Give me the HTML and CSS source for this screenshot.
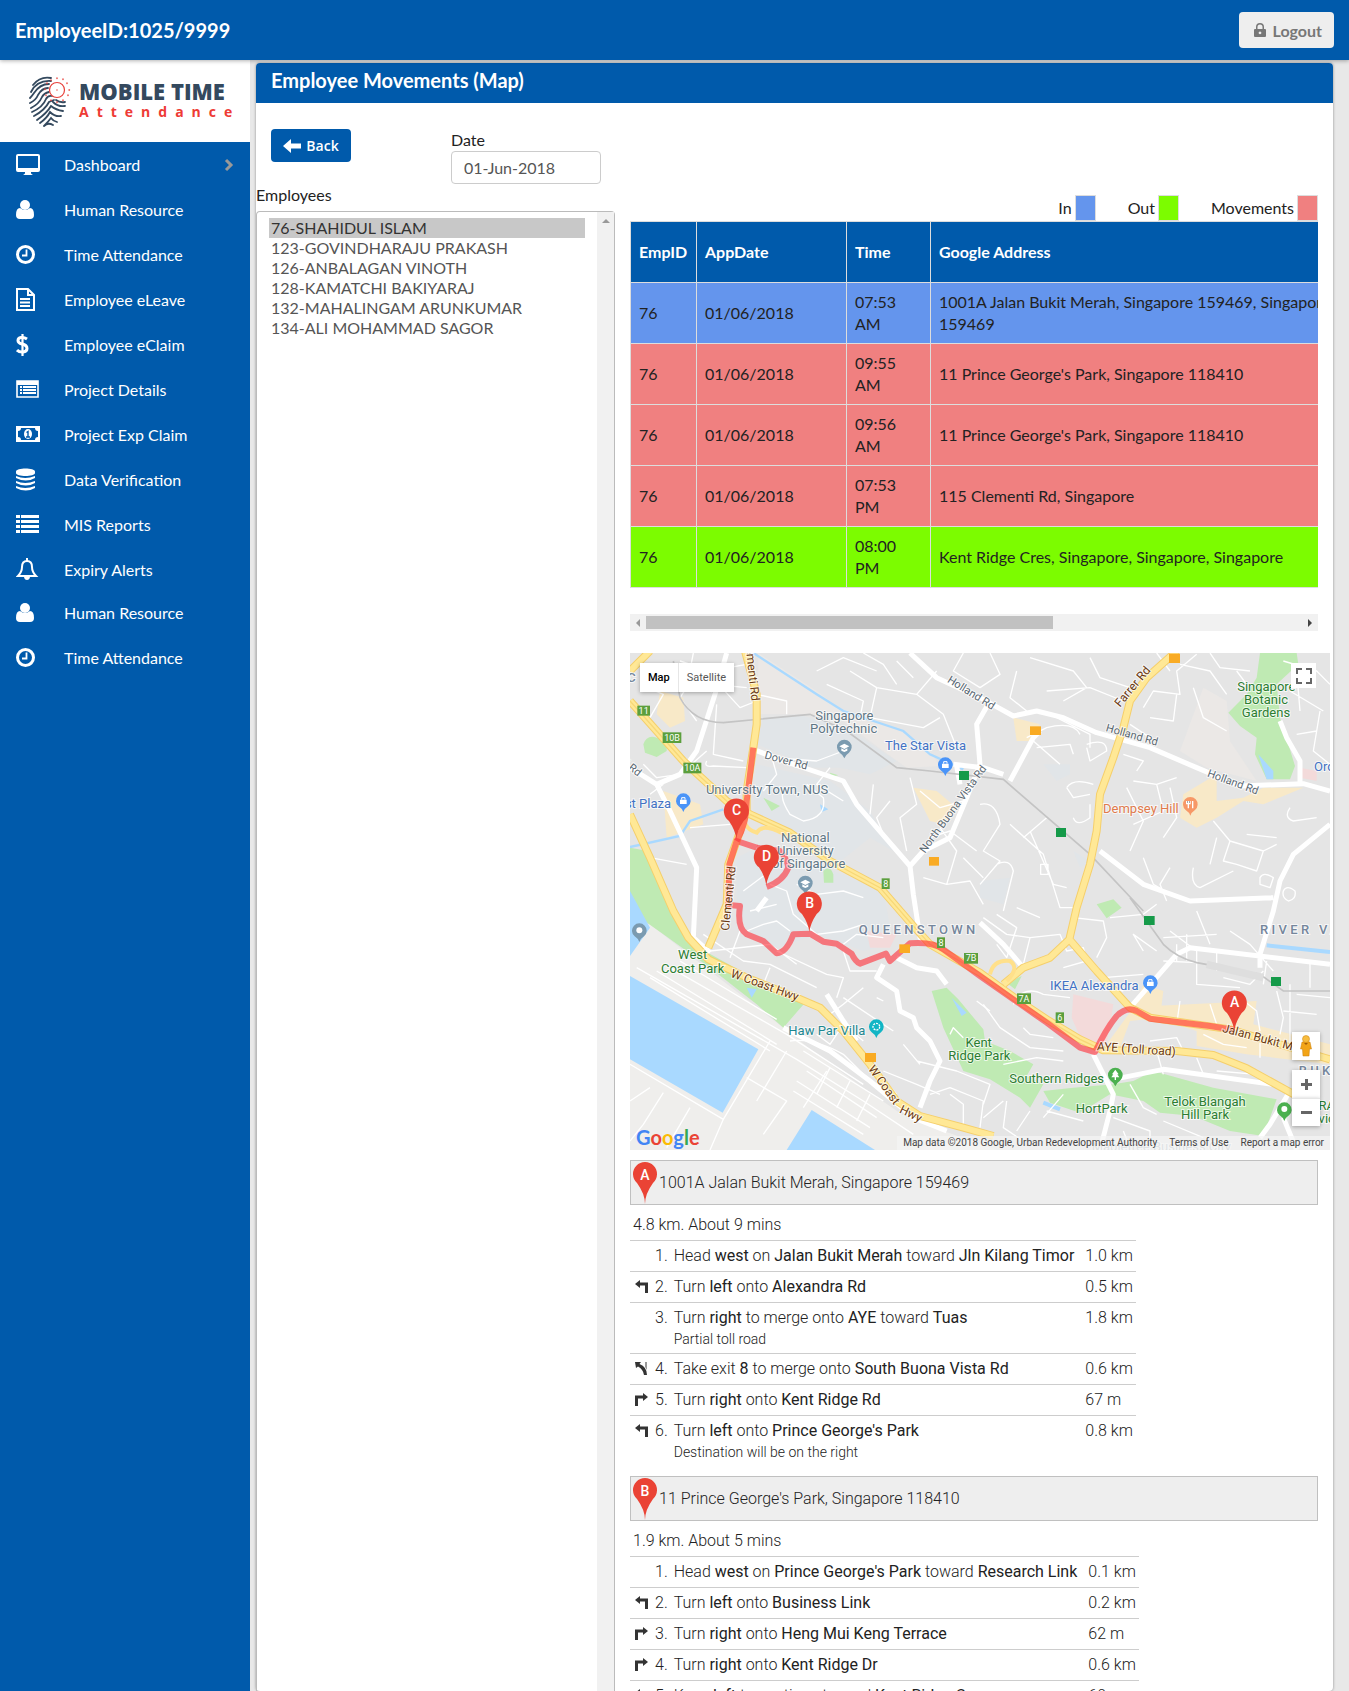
FILE: index.html
```html
<!DOCTYPE html>
<html lang="en">
<head>
    <meta charset="UTF-8">
    <meta name="viewport" content="width=device-width, initial-scale=1.0">
    <title>Employee Movements (Map)</title>
    <link rel="stylesheet" href="styles.css">
</head>
<body>
    <header class="topbar">
        <h1>EmployeeID:1025/9999</h1>
        <button type="button" class="btn-logout">
            <svg width="12" height="15" viewBox="0 0 12 15"><path fill="#777" fill-rule="evenodd" d="M2 6V4a4 4 0 0 1 8 0v2h1q1 0 1 1v6q0 1-1 1H1q-1 0-1-1V7q0-1 1-1zm1.500 0h5V4a2.500 2.500 0 0 0-5 0zM6 8.500a1.400 1.400 0 1 0 .01 0z"/></svg>
            Logout
        </button>
    </header>
    <div class="layout">
        <aside class="sidebar">
            <div class="logo">
                <svg width="42" height="52" viewBox="0 0 42 52" fill="none" stroke="#34495e" stroke-width="1.8" stroke-linecap="round">
                    <path d="M4 10Q11 1 22 3M2 17Q8 5 22 6M1 23Q3 21 5 18Q11 9 20 9M1 28Q7 25 9 20Q13 13 19 13M2 33Q10 29 13 22Q15 18 20 17M3 37Q14 32 17 24Q19 20 23 21M5 41Q16 35 20 27L25 25M8 45Q18 38 22 31Q27 35 34 36M11 48Q18 43 21 37Q26 42 32 41M15 51Q19 47 22 43Q24 46 28 47M15 51Q19 47 24 50M24 27Q29 32 36 31M27 25Q31 28 36 27"/>
                    <circle cx="28" cy="15" r="7.500" stroke="#e8403a" stroke-width="1.200" fill="#fff"/>
                    <path stroke="#e8403a" stroke-width="1.400" d="M28 3v.5M34 4v.5M38 8v.5M40 15h.5M39 20v.5M34 25v.5M28 27v.5M22 25v.5M17 20v.5M16 14v.5M18 8v.5M22 5v.5M28 15v.1"/>
                </svg>
                <div class="logo-text">
                    <strong>MOBILE TIME</strong>
                    <span>Attendance</span>
                </div>
            </div>
            <nav>
                <ul>
                    <li><a href="#">
                        <svg viewBox="0 0 24 24"><path fill="#fff" fill-rule="evenodd" d="M2 1h20q2 0 2 2v14q0 2-2 2h-7v1q0 1 1.500 1.500V22h-9v-.5Q9 21 9 20v-1H2q-2 0-2-2V3q0-2 2-2zm0 2v12h20V3z"/></svg>
                        Dashboard
                        <svg class="arrow" viewBox="0 0 10 14"><path d="M2 2l5 5-5 5" fill="none" stroke="#999" stroke-width="3"/></svg>
                    </a></li>
                    <li><a href="#">
                        <svg viewBox="0 0 24 24"><circle cx="9" cy="7" r="5" fill="#fff"/><path fill="#fff" d="M4 10q5 4 10 0q4 0 4 7q0 4-4 4H4q-4 0-4-4q0-7 4-7z"/></svg>
                        Human Resource
                    </a></li>
                    <li><a href="#">
                        <svg viewBox="0 0 24 24"><circle cx="9.500" cy="11.500" r="8" fill="none" stroke="#fff" stroke-width="3"/><path d="M10.500 6.500v6H6" fill="none" stroke="#fff" stroke-width="1.800"/></svg>
                        Time Attendance
                    </a></li>
                    <li><a href="#">
                        <svg viewBox="0 0 24 24"><path fill="none" stroke="#fff" stroke-width="2" d="M1 1h11l6 6v15H1zM12 1v6h6M4 11h10M4 14.500h10M4 18h10"/></svg>
                        Employee eLeave
                    </a></li>
                    <li><a href="#">
                        <svg viewBox="0 0 24 24"><path fill="none" stroke="#fff" stroke-width="3" d="M11 6Q8 4 5 4.500Q2 5 2 7.500Q2 10 6 11Q11 12 11 15.500Q11 18.500 7 19Q3 19.200 1 17"/><path d="M6.500 1v22" stroke="#fff" stroke-width="2.200"/></svg>
                        Employee eClaim
                    </a></li>
                    <li><a href="#">
                        <svg viewBox="0 0 24 24"><path fill="none" stroke="#fff" stroke-width="1.600" d="M1 3h21v16H1z"/><path fill="#fff" d="M1 3h21v4H1zM4 8h2v2H4zM4 11h2v2H4zM4 14h2v2H4zM7 8h13v2H7zM7 11h13v2H7zM7 14h13v2H7z"/></svg>
                        Project Details
                    </a></li>
                    <li><a href="#">
                        <svg viewBox="0 0 24 24"><path fill="#fff" fill-rule="evenodd" d="M0 3h24v16H0zM5 5q0 3-3 3v6q3 0 3 3h14q0-3 3-3V8q-3 0-3-3z"/><ellipse cx="12" cy="11" rx="4" ry="5" fill="#fff"/><path fill="none" stroke="#005aab" stroke-width="1.400" d="M10.500 9.500l1.500-1v5M10 14h4"/></svg>
                        Project Exp Claim
                    </a></li>
                    <li><a href="#">
                        <svg viewBox="0 0 24 24"><path fill="#fff" d="M0 3.500C0-.5 19-.5 19 3.500V5C19 9 0 9 0 5zM0 8q9 4 19 0v2q-9 5-19 0zM0 13q9 4 19 0v2q-9 5-19 0zM0 18q9 4 19 0v2q-9 5-19 0z"/></svg>
                        Data Verification
                    </a></li>
                    <li><a href="#">
                        <svg viewBox="0 0 24 24"><path fill="#fff" d="M0 2h4v3H0zM0 7h4v3H0zM0 12h4v3H0zM0 17h4v3H0zM5 2h18v3H5zM5 7h18v3H5zM5 12h18v3H5zM5 17h18v3H5z"/></svg>
                        MIS Reports
                    </a></li>
                    <li><a href="#">
                        <svg viewBox="0 0 24 24"><path fill="none" stroke="#fff" stroke-width="2" d="M2 18Q6 14 6 9Q6 3 11 3Q16 3 16 9Q16 14 20 18z"/><path fill="#fff" d="M10 0h2v3h-2zM8 19h6q-.5 3-3 3t-3-3z"/></svg>
                        Expiry Alerts
                    </a></li>
                </ul>
                <ul class="second">
                    <li><a href="#">
                        <svg viewBox="0 0 24 24"><circle cx="9" cy="7" r="5" fill="#fff"/><path fill="#fff" d="M4 10q5 4 10 0q4 0 4 7q0 4-4 4H4q-4 0-4-4q0-7 4-7z"/></svg>
                        Human Resource
                    </a></li>
                    <li><a href="#">
                        <svg viewBox="0 0 24 24"><circle cx="9.500" cy="11.500" r="8" fill="none" stroke="#fff" stroke-width="3"/><path d="M10.500 6.500v6H6" fill="none" stroke="#fff" stroke-width="1.800"/></svg>
                        Time Attendance
                    </a></li>
                </ul>
            </nav>
        </aside>
        <main class="card">
            <h2>Employee Movements (Map)</h2>
            <div class="filters">
                <button type="button" class="btn-back">
                    <svg width="18" height="14" viewBox="0 0 18 14"><path fill="#fff" d="M0 7l8-7v4.500h10v5H8V14z"/></svg>
                    Back
                </button>
                <div class="field">
                    <label for="date">Date</label>
                    <input type="text" id="date" value="01-Jun-2018">
                </div>
            </div>
            <div class="columns">
                <div class="employees">
                    <label for="employees">Employees</label>
                    <div class="listbox">
                        <select id="employees" size="60">
                            <option class="current">76-SHAHIDUL ISLAM</option>
                            <option>123-GOVINDHARAJU PRAKASH</option>
                            <option>126-ANBALAGAN VINOTH</option>
                            <option>128-KAMATCHI BAKIYARAJ</option>
                            <option>132-MAHALINGAM ARUNKUMAR</option>
                            <option>134-ALI MOHAMMAD SAGOR</option>
                        </select>
                        <div class="vbar">
                            <svg width="8" height="4" viewBox="0 0 8 4"><path fill="#999" d="M0 4l4-4 4 4z"/></svg>
                        </div>
                    </div>
                </div>
                <div class="movements">
                    <div class="legend">
                        <span>In <i class="in"></i></span>
                        <span>Out <i class="out"></i></span>
                        <span>Movements <i class="move"></i></span>
                    </div>
                    <div class="scrollable">
                        <table class="grid">
                            <thead>
                                <tr>
                                    <th class="c-id">EmpID</th>
                                    <th class="c-date">AppDate</th>
                                    <th class="c-time">Time</th>
                                    <th>Google Address</th>
                                </tr>
                            </thead>
                            <tbody>
                                <tr class="in"><td>76</td><td>01/06/2018</td><td>07:53 AM</td><td>1001A Jalan Bukit Merah, Singapore 159469, Singapore<br>159469</td></tr>
                                <tr class="move"><td>76</td><td>01/06/2018</td><td>09:55 AM</td><td>11 Prince George's Park, Singapore 118410</td></tr>
                                <tr class="move"><td>76</td><td>01/06/2018</td><td>09:56 AM</td><td>11 Prince George's Park, Singapore 118410</td></tr>
                                <tr class="move"><td>76</td><td>01/06/2018</td><td>07:53 PM</td><td>115 Clementi Rd, Singapore</td></tr>
                                <tr class="out"><td>76</td><td>01/06/2018</td><td>08:00 PM</td><td>Kent Ridge Cres, Singapore, Singapore, Singapore</td></tr>
                            </tbody>
                        </table>
                    </div>
                    <div class="hbar">
                        <svg width="4" height="8" viewBox="0 0 4 8"><path fill="#999" d="M4 0L0 4l4 4z"/></svg>
                        <div class="track"><div class="thumb"></div></div>
                        <svg width="4" height="8" viewBox="0 0 4 8"><path fill="#444" d="M0 0l4 4-4 4z"/></svg>
                    </div>

                    <div class="map">
                        <svg class="tiles" viewBox="0 6 2100 1491" preserveAspectRatio="xMinYMin slice">
                            <defs>
                                <g id="pin"><path fill="#ea4335" d="M0 86Q-3 60-22 32A37.500 37.500 0 1 1 22 32Q3 60 0 86z"/></g>
                                <path id="poi" d="M0 34Q-3 24-14 17A22 22 0 1 1 14 17Q3 24 0 34z"/>
                            </defs>
                            <rect y="6" width="2100" height="1491" fill="#e5e5e5"/>

                            <!-- land use -->
                            <path fill="#efeeec" d="M0 830L60 820L240 960L460 1130L560 1210L700 1310L830 1400L1100 1497H0z"/>
                            <path fill="#ebe8e6" d="M385 6L560 120L640 180L800 230L900 300L930 345L830 350L760 300L640 210L520 190H385zM1720 110L1790 150L1800 270L1880 390L1730 350L1650 300z"/>
                            <path fill="#e1e5e8" d="M400 200L520 195L650 230L800 330L720 370L630 350L550 350L380 280zM380 340L600 390L720 480L790 600L720 560L620 640L480 560L370 480zM360 600L560 640L760 720L790 880L700 900L560 850L420 900L350 830L320 770L320 620zM1240 340h80v30l-40 20zM1050 690l90-10-20 80-70-20zM1330 600l50 30-30 20z"/>
                            <path fill="#f8e9c8" d="M90 120L160 140L165 210L120 230L80 190zM100 420L210 460L220 520L110 560zM850 410L920 420L980 470L940 520L900 510zM1150 200L1230 220L1200 270L1160 270zM1660 430L1760 370V450L1840 440L1900 410L2020 410L1900 460L1840 450L1760 500L1700 530L1650 500zM1540 1000L1600 1020L1590 1100L1500 1110L1470 1190L1430 1180L1510 1070zM1570 1065L1880 1050L1870 1120L2100 1180V1240L1850 1210L1700 1185V1140L1570 1100z"/>
                            <path fill="#f3dada" d="M1330 1030L1450 1060L1430 1180H1360L1325 1100zM710 840L800 850L780 890L720 890zM2010 350l50 10v30l-50-10z"/>
                            <path fill="#bfeab3" d="M0 590L55 600L75 660L110 760L170 870L350 970L525 1055L460 1130L380 1060L240 950L100 850L30 800L0 790z"/>
                            <path fill="#bfeab3" d="M40 280Q50 250 80 260L110 270V300L80 318L45 305zM400 440L450 465L425 480zM580 660Q600 640 610 670V695H582zM600 365l25 8-22 4z"/>
                            <path fill="#bfeab3" d="M905 1020L950 1010L985 1045L1060 1135L1065 1170L1140 1200L1210 1240L1190 1275L1240 1300L1200 1370L1170 1340L1080 1285L1000 1260L940 1130z"/>
                            <path fill="#bfeab3" d="M1240 1320L1330 1310L1450 1300L1510 1290L1570 1260L1750 1310L1940 1345L1900 1455L1800 1440L1690 1395L1590 1385L1540 1350L1440 1330L1350 1385L1260 1355zM1400 760L1450 745L1475 770L1430 802zM1130 995l45-20-20 40z"/>
                            <path fill="#bfeab3" d="M1890 6H2000L2005 40L1940 100L1950 200L1975 280L1995 345L1980 385H1910L1875 310L1880 260L1830 225L1795 185L1850 130L1880 80z"/>

                            <!-- water -->
                            <path fill="#a9d9ff" d="M0 975L385 1195L278 1385L0 1225zM470 1497L545 1377L735 1497zM0 720L30 775L60 830L0 915zM350 1010l30 5-15 25zM965 1040L1010 1085L995 1095zM1885 310L1930 360V385H1910zM570 460l25 15-20 8z"/>
                            <path fill="none" stroke="#a9d9ff" stroke-width="7" d="M370 6L560 130L640 180L820 240L900 310L1000 355M0 588L150 555L180 510L280 475"/>
                            <path fill="none" stroke="#a9d9ff" stroke-width="12" d="M1910 883L2100 903M1240 1355L1290 1375"/>

                            <!-- port berths -->
                            <path class="minor" d="M20 950L500 1225L700 1350L850 1450M120 950L470 1150L700 1300M80 960L440 1180M60 980L420 1200M150 930L440 1105M0 1240L280 1405L420 1170M280 1405L240 1497M100 1325L40 1420L0 1470M180 1370L110 1490M350 1280L470 1350L400 1450M470 1200L380 1350M590 1260L520 1370M520 1200L760 1350M530 1260L740 1400M500 1290L720 1430M490 1320L700 1450M600 1250L560 1330M660 1290L620 1370M720 1330L680 1410M0 1350L60 1310"/>

                            <!-- small streets -->
                            <path class="minor" d="M150 30L240 60L350 40M190 6L170 110L150 140L200 210M220 50L330 170L380 150M250 100L350 110M30 100L100 130L60 200M260 160L250 310L340 330M230 330Q220 350 250 345L350 350M40 340L80 380L150 370L230 300M420 300L440 370L400 420M470 410Q440 430 480 490L520 510Q590 500 580 440L530 400M600 350L560 400L640 450M720 490L730 400M380 130L470 150V190M430 320L560 330L640 300M660 60L740 110L860 130L920 60M700 6L760 40L800 100M740 110L720 200L880 230L930 200M860 130L940 190L980 290M1000 6L970 60L1050 110L1110 70L1080 6M800 30L850 80M560 60L640 20L740 60M590 100L700 150L690 200M780 450L740 500L760 550M840 380L860 460L810 500L830 600M870 420L930 470L1000 450M900 560L960 540L1040 600M880 680L950 700L1020 690L1060 760M950 700L980 600L930 530M1000 620L1060 680M1050 460Q1100 450 1110 520L1060 600L1110 630L1050 700M1100 640Q1140 620 1150 660L1120 780M1140 520L1240 610L1290 770L1340 770M1180 560L1250 500M1200 540L1270 700L1310 710M1232 640h22v30h-22zM1310 410Q1330 380 1390 400M1310 410L1330 440L1380 430M1380 460V500Q1340 530 1330 500"/>
                            <path class="minor" d="M1160 60L1140 140L1190 180M1200 20L1330 60L1370 110L1300 150M1380 20L1410 80L1500 110M1250 120L1380 110L1480 150M1280 200L1380 250V290M1370 280Q1430 260 1430 300L1380 330L1370 290M1190 260L1250 230Q1330 210 1350 250M1220 290L1320 280L1330 310M1210 270L1290 340M1540 170L1570 120L1650 130L1640 60L1700 10M1560 200L1630 210L1640 130M1580 6L1620 60M1650 40L1740 60L1790 130M1690 110L1720 200L1790 240M1500 220L1560 260M1480 310L1540 330L1520 360M1510 390L1580 400L1600 480L1510 520M1490 410L1540 510L1500 600M1580 400L1640 380M1620 410L1640 500L1600 560M1740 6L1770 50L1860 60M1820 60L1850 100M1980 120L2080 180M1960 30L2060 60L2100 100M2000 250L2060 240M2000 60L2010 180M2070 180L2050 300L2100 340M1750 510L1800 570L1900 600L1940 580M1800 570L1780 630L1820 640L1880 660L1900 600M1850 550L1940 560M1980 470Q1960 500 1990 510L2060 500M1890 680Q1900 660 1930 680L1920 710L1890 700zM1960 720Q1970 700 1995 720Q2000 745 1975 750Q1955 740 1960 720M1540 620L1570 700L1640 740M1620 650L1590 700L1610 750M1690 650Q1680 700 1710 710L1810 660M1740 640L1760 560"/>
                            <path class="minor" d="M350 840L400 820L440 810L480 840M420 700L470 720L490 790L560 850M500 700L560 730L640 720L700 740M560 850L640 840L700 820M640 880L680 850L760 860M360 780L440 760M60 620L170 640M60 430L100 400M180 530L300 520M340 720L420 660M330 840L300 920M220 850L340 930L420 940L560 1010M240 900L420 880L500 940M420 950L400 1000M440 900L590 970L640 980L620 1040M640 1040L760 1120L790 1140M560 1150L600 1180L640 1120L700 1170M480 1170Q550 1160 640 1210L700 1270M740 1040L760 1050M600 1090L640 1060L700 1010M760 1260L860 1300L930 1330M820 1180L870 1240M740 1260L800 1330M640 900L660 960L740 960M960 1330L1000 1360V1440M900 1330L960 1310L1060 1350L1050 1430M860 1230L980 1260L1080 1300L1060 1360M1130 1350L1120 1430L1180 1470M1200 1380L1160 1440M960 1150L970 1130L1000 1160M1040 1050L1080 1080"/>
                            <path class="minor" d="M1060 800L1130 850L1200 860L1290 850M1100 790L1160 830L1130 920L1100 880M1160 770L1230 800M1200 860L1180 940M1290 850L1310 900L1360 890L1370 930L1300 950M1330 800L1420 810L1430 860L1400 920M1440 800L1540 790L1580 760M1540 900L1510 850L1580 900M1420 980L1540 970M1420 1000L1480 1020M1150 1060Q1180 1000 1240 1030L1320 1040M1180 1130L1200 1150L1270 1160M1060 1060L1110 1130L1200 1190L1300 1200M1120 1240L1220 1220L1300 1230M1620 840L1700 900V1000L1830 1010M1640 880L1640 930M1670 850V930M1700 780L1740 880M1760 900V960M1600 930L1700 935M1600 860L1760 850M1800 840L1860 880L1930 960M1780 980L1860 1000L1900 960M1830 1040L1880 1080L1890 1140M1940 1020L1960 1100L1950 1150M1980 1000V1180M2000 1030L2100 1040M2040 930V1010M1910 930L1900 1000M1960 1080L2060 1090M1740 1060L1760 1120M1650 1050L1640 1120M1580 1200L1600 1270M1700 1220L1720 1270M1760 1260L1880 1270M1560 1170L1640 1160L1660 1200M1720 1150L1780 1180L1850 1190M1890 1150V1220M1500 1300L1540 1370L1580 1390M1600 1410L1720 1460M1450 1400L1560 1440V1490M1250 1380L1360 1410M1300 1330L1240 1400M1480 1440L1500 1490M1060 1400L1120 1350"/>

                            <!-- main streets -->
                            <path class="major" d="M840 6L920 80L1050 140L1150 195L1220 180L1300 200L1400 245L1560 290L1700 350L1830 405L2020 398L2100 420M970 340L1060 350L1120 370M290 6L255 130L200 300L150 370L80 400L0 350M200 60L250 120M370 295L460 330L640 390L680 460L840 645L850 730L870 860L900 880M840 645L880 600L960 560L1010 440L1050 340L1040 220L1080 150M1140 390L1210 260L1230 240M980 345L990 400M80 400L120 480L200 650L190 860L240 905M380 780L410 740"/>
                            <path class="major" d="M1950 210L1970 260L2010 330V398M2100 520L1990 610L1950 690L1930 780L1890 910V950M1410 600L1540 700L1680 750L1930 740M1640 910L1680 890L2100 940M1640 910L1500 1070M1050 815L1120 880L1180 950M760 940L740 980L800 1020L810 1080L850 1100L860 1130L900 1170L930 1230L900 1290L870 1370M800 920L860 950L920 960L950 1000M1390 1210L1450 1330L1440 1380L1410 1497M1450 1285L1600 1255L1930 1300M1980 1320L1920 1420L1890 1460M1960 1400L2000 1497M590 1030L640 1110L680 1170M460 1130L600 1200L720 1290L850 1400L950 1440"/>
                            <path fill="none" stroke="#c4c4c4" stroke-width="5" d="M130 30L150 140Q190 215 280 215L540 190L650 240L800 350L900 360L1120 385L1380 610L1540 780M1500 740L1600 880Q1640 920 1700 935L1890 970L1960 1020H2100"/>
                            <path fill="none" stroke="#dedede" stroke-width="22" d="M1730 940L1900 980"/>

                            <!-- expressways -->
                            <g id="highways">
                                <path class="casing" d="M0 150L160 330L290 450L360 490L480 545L600 630L750 710L850 825L900 880L1050 965L1160 1045L1250 1105L1350 1165L1420 1198L1640 1200L1750 1212L1850 1252L2010 1340M345 0L380 130V220L370 290L350 420V480L320 570L295 640L290 760L235 890M0 490L60 620L130 780L175 860L235 925L350 980L500 1040L570 1070L640 1140L720 1240L800 1350L870 1395L1000 1430L1090 1455M1640 0L1550 80L1500 150L1480 230L1450 320L1410 430L1400 540L1380 640L1340 770L1318 865L1260 920L1180 950L1120 1000M1318 865L1400 960L1500 1070L1560 1100L1800 1135L2100 1225M60 0L0 60"/>
                                <path class="road" d="M0 150L160 330L290 450L360 490L480 545L600 630L750 710L850 825L900 880L1050 965L1160 1045L1250 1105L1350 1165L1420 1198L1640 1200L1750 1212L1850 1252L2010 1340M345 0L380 130V220L370 290L350 420V480L320 570L295 640L290 760L235 890M0 490L60 620L130 780L175 860L235 925L350 980L500 1040L570 1070L640 1140L720 1240L800 1350L870 1395L1000 1430L1090 1455M1640 0L1550 80L1500 150L1480 230L1450 320L1410 430L1400 540L1380 640L1340 770L1318 865L1260 920L1180 950L1120 1000M1318 865L1400 960L1500 1070L1560 1100L1800 1135L2100 1225M60 0L0 60"/>
                                <path fill="none" stroke="#f7d778" stroke-width="4" d="M0 150L160 330L290 450L360 490L480 545L600 630L750 710L850 825L900 880L1050 965L1160 1045L1250 1105L1350 1165L1420 1198"/>
                                <path fill="none" stroke="#ffe08a" stroke-width="12" d="M1080 970Q1090 925 1140 930Q1170 950 1130 990M350 480Q330 530 380 545Q400 510 480 560M360 490Q330 500 340 540"/>
                            </g>

                            <!-- route -->
                            <path class="route" d="M1813 1137L1740 1125L1560 1103L1520 1080Q1490 1065 1460 1095Q1430 1130 1395 1203L1350 1190L1250 1115L1050 975L940 895Q910 872 840 877L780 930L768 908L690 938Q675 930 665 908L620 878L580 872L540 848L490 850Q470 905 440 907L400 870L350 850Q320 830 330 765L295 762L298 640L320 570L380 590"/>
                            <path class="route" d="M320 570Q350 520 350 450L370 290"/>
                            <path class="route" d="M380 590L450 600Q470 620 475 650Q460 690 410 708"/>

                            <!-- road signs -->
                            <g fill="#5b9f3d"><rect x="22" y="164" width="38" height="30"/><rect x="98" y="244" width="56" height="32"/><rect x="160" y="335" width="54" height="32"/><rect x="755" y="682" width="24" height="32"/><rect x="921" y="859" width="24" height="32"/><rect x="1002" y="906" width="42" height="32"/><rect x="1161" y="1027" width="42" height="32"/><rect x="1277" y="1084" width="25" height="32"/></g>
                            <g class="sign"><text x="41" y="189">11</text><text x="126" y="269">10B</text><text x="187" y="361">10A</text><text x="767" y="707">8</text><text x="933" y="884">8</text><text x="1023" y="931">7B</text><text x="1182" y="1052">7A</text><text x="1289" y="1109">6</text></g>
                            <g fill="#f9ab24"><rect x="897" y="618" width="30" height="26"/><rect x="1200" y="226" width="33" height="26"/><rect x="1617" y="8" width="33" height="28"/><rect x="808" y="880" width="32" height="26"/><rect x="705" y="1206" width="33" height="27"/></g>
                            <g fill="#159a49"><rect x="987" y="360" width="30" height="27"/><rect x="1278" y="531" width="30" height="27"/><rect x="1542" y="795" width="32" height="27"/><rect x="1923" y="978" width="30" height="27"/></g>

                            <!-- labels -->
                            <g class="label brown">
                                <text transform="translate(344 -42) rotate(84)">Clementi Rd</text>
                                <text transform="translate(297 840) rotate(-84)">Clementi Rd</text>
                                <text transform="translate(300 977) rotate(20)">W Coast Hwy</text>
                                <text transform="translate(713 1254) rotate(54)">W Coast</text>
                                <text transform="translate(806 1384) rotate(26)">Hwy</text>
                                <text transform="translate(1470 170) rotate(-50)">Farrer Rd</text>
                                <text transform="translate(1400 1198) rotate(4)">AYE (Toll road)</text>
                                <text transform="translate(1775 1142) rotate(15)">Jalan Bukit Merah</text>
                            </g>
                            <g class="label street">
                                <text transform="translate(402 322) rotate(15)">Dover Rd</text>
                                <text transform="translate(950 92) rotate(32)">Holland Rd</text>
                                <text transform="translate(1426 240) rotate(16)">Holland Rd</text>
                                <text transform="translate(1730 376) rotate(20)">Holland Rd</text>
                                <text transform="translate(885 608) rotate(-54)">North Buona Vista Rd</text>
                                <text transform="translate(-52 318) rotate(38)">Old Rd</text>
                            </g>
                            <g class="label place-name middle">
                                <text x="643" y="208">Singapore</text><text x="641" y="247">Polytechnic</text>
                                <text x="411" y="430">University Town, NUS</text>
                                <text x="526" y="573">National</text><text x="526" y="613">University</text><text x="536" y="652">of Singapore</text>
                            </g>
                            <g class="label shop">
                                <text x="765" y="298">The Star Vista</text><text x="-70" y="472">West Plaza</text><text x="1260" y="1018">IKEA Alexandra</text><text x="2052" y="361">Orchard</text>
                            </g>
                            <text class="label food" x="1419" y="485">Dempsey Hill</text>
                            <text class="label villa" x="475" y="1151">Haw Par Villa</text>
                            <g class="label park middle">
                                <text x="188" y="925">West</text><text x="188" y="965">Coast Park</text>
                                <text x="1909" y="119">Singapore</text><text x="1908" y="158">Botanic</text><text x="1908" y="197">Gardens</text>
                                <text x="1046" y="1187">Kent</text><text x="1048" y="1226">Ridge Park</text>
                                <text x="1280" y="1295">Southern Ridges</text><text x="1415" y="1385">HortPark</text>
                                <text x="1725" y="1364">Telok Blangah</text><text x="1725" y="1403">Hill Park</text>
                                <text x="2122" y="1378">RADIN</text><text x="2126" y="1417">vicinity</text>
                            </g>
                            <text class="label area" x="686" y="849">QUEENSTOWN</text>
                            <text class="label area" x="1890" y="849">RIVER VALLEY</text>
                            <text class="label area" x="2006" y="1273">BUKIT</text>
                            <text class="label area" x="-8" y="92">C</text>
                            <text class="label" fill="#aab4bb" x="1385" y="1500">Mapletree Business City</text>

                            <!-- places -->
                            <use href="#poi" x="643" y="288" fill="#7b9bb0"/><path fill="#fff" d="M628 286l15-8 15 8-15 8zM634 292l9 5 9-5v7l-9 4-9-4z"/>
                            <use href="#poi" x="526" y="696" fill="#7b9bb0"/><path fill="#fff" d="M511 694l15-8 15 8-15 8zM517 700l9 5 9-5v7l-9 4-9-4z"/>
                            <use href="#poi" x="28" y="839" fill="#7b9bb0"/><circle cx="28" cy="838" r="9" fill="#fff"/>
                            <g fill="#4a94f8"><use href="#poi" x="946" y="341"/><use href="#poi" x="160" y="449"/><use href="#poi" x="1561" y="995"/></g>
                            <g fill="#fff"><path d="M936 338h20v13h-20zM150 446h20v13h-20zM1551 992h20v13h-20z"/></g>
                            <path fill="none" stroke="#fff" stroke-width="3" d="M941 338v-6h10v6M155 446v-6h10v6M1556 992v-6h10v6"/>
                            <use href="#poi" x="1681" y="460" fill="#f79867"/><path stroke="#fff" stroke-width="4" d="M1675 450v22M1670 450v8h10v-8M1688 450v22"/>
                            <use href="#poi" x="739" y="1127" fill="#12b5c5"/><circle cx="739" cy="1127" r="10" fill="none" stroke="#fff" stroke-width="4" stroke-dasharray="6 3"/>
                            <use href="#poi" x="1456" y="1272" fill="#4bb04f"/><path fill="#fff" d="M1456 1256l10 14h-4l6 9h-10v8h-4v-8h-10l6-9h-4z"/>
                            <use href="#poi" x="1963" y="1376" fill="#4bb04f"/><circle cx="1963" cy="1374" r="9" fill="#fff"/>

                            <use href="#pin" x="319" y="478"/><use href="#pin" x="538" y="757"/><use href="#pin" x="409" y="617"/><use href="#pin" x="1813" y="1054"/>
                            <g class="pin-letter"><text x="320" y="491">C</text><text x="539" y="771">B</text><text x="410" y="631">D</text><text x="1814" y="1069">A</text></g>
                        </svg>
                        <div class="map-type">
                            <button type="button" class="active">Map</button>
                            <button type="button">Satellite</button>
                        </div>
                        <button type="button" class="fullscreen" aria-label="Toggle fullscreen view">
                            <svg width="16" height="16" viewBox="0 0 16 16"><path fill="none" stroke="#666" stroke-width="2" d="M1 6V1h5M10 1h5v5M15 10v5h-5M6 15H1v-5"/></svg>
                        </button>
                        <div class="map-side">
                            <button type="button" aria-label="Street View">
                                <svg width="14" height="22" viewBox="0 0 14 22"><path fill="#f2a417" stroke="#c87f0a" stroke-width=".5" d="M3 7h8l1.500 7h-2L10 21H4l-.5-7h-2z"/><circle cx="7" cy="4" r="3.500" fill="#f8bd3f" stroke="#c87f0a" stroke-width=".5"/><path fill="#a35c05" d="M5 8l2 2 2-2z"/></svg>
                            </button>
                            <div class="zoom">
                                <button type="button" aria-label="Zoom in"><svg width="11" height="11" viewBox="0 0 11 11"><path stroke="#666" stroke-width="3" d="M0 5.500h11M5.500 0v11"/></svg></button>
                                <button type="button" aria-label="Zoom out"><svg width="11" height="11" viewBox="0 0 11 11"><path stroke="#666" stroke-width="3" d="M0 5.500h11"/></svg></button>
                            </div>
                        </div>
                        <div class="google"><span class="g-blue">G</span><span class="g-red">o</span><span class="g-yellow">o</span><span class="g-blue">g</span><span class="g-green">l</span><span class="g-red">e</span></div>
                        <div class="credits">
                            <span>Map data ©2018 Google, Urban Redevelopment Authority</span>
                            <a href="#">Terms of Use</a>
                            <a href="#">Report a map error</a>
                        </div>
                    </div>

                    <div class="directions">
                        <div class="place">
                            <svg width="25" height="42" viewBox="0 0 25 42"><path fill="#ea4335" d="M12 42Q12 32 4 21A12 12 0 1 1 20 21Q12 32 12 42z"/><text x="12" y="18">A</text></svg>
                            1001A Jalan Bukit Merah, Singapore 159469
                        </div>
                        <p>4.8 km. About 9 mins</p>
                        <table class="steps">
                            <tr><td class="turn"></td><td class="num">1.</td><td>Head <b>west</b> on <b>Jalan Bukit Merah</b> toward <b>Jln Kilang Timor</b></td><td class="dist">1.0 km</td></tr>
                            <tr><td class="turn"><svg viewBox="0 0 14 16"><path d="M0 6l5-4v2.500h8V15h-3V7.500H5V10z"/></svg></td><td class="num">2.</td><td>Turn <b>left</b> onto <b>Alexandra Rd</b></td><td class="dist">0.5 km</td></tr>
                            <tr><td class="turn"></td><td class="num">3.</td><td>Turn <b>right</b> to merge onto <b>AYE</b> toward <b>Tuas</b><small>Partial toll road</small></td><td class="dist">1.8 km</td></tr>
                            <tr><td class="turn"><svg viewBox="0 0 14 16"><path d="M0 2h6L4.500 4Q12 7 12 15H9Q8 9 3 6.500L1 8z"/><path fill="#999" d="M10 2h2v8l-2-3z"/></svg></td><td class="num">4.</td><td>Take exit <b>8</b> to merge onto <b>South Buona Vista Rd</b></td><td class="dist">0.6 km</td></tr>
                            <tr><td class="turn"><svg viewBox="0 0 14 16"><path d="M13 6L8 2v2.500H0V15h3V7.500h5V10z"/></svg></td><td class="num">5.</td><td>Turn <b>right</b> onto <b>Kent Ridge Rd</b></td><td class="dist">67 m</td></tr>
                            <tr><td class="turn"><svg viewBox="0 0 14 16"><path d="M0 6l5-4v2.500h8V15h-3V7.500H5V10z"/></svg></td><td class="num">6.</td><td>Turn <b>left</b> onto <b>Prince George's Park</b><small>Destination will be on the right</small></td><td class="dist">0.8 km</td></tr>
                        </table>
                        <div class="place">
                            <svg width="25" height="42" viewBox="0 0 25 42"><path fill="#ea4335" d="M12 42Q12 32 4 21A12 12 0 1 1 20 21Q12 32 12 42z"/><text x="12" y="18">B</text></svg>
                            11 Prince George's Park, Singapore 118410
                        </div>
                        <p>1.9 km. About 5 mins</p>
                        <table class="steps">
                            <tr><td class="turn"></td><td class="num">1.</td><td>Head <b>west</b> on <b>Prince George's Park</b> toward <b>Research Link</b></td><td class="dist">0.1 km</td></tr>
                            <tr><td class="turn"><svg viewBox="0 0 14 16"><path d="M0 6l5-4v2.500h8V15h-3V7.500H5V10z"/></svg></td><td class="num">2.</td><td>Turn <b>left</b> onto <b>Business Link</b></td><td class="dist">0.2 km</td></tr>
                            <tr><td class="turn"><svg viewBox="0 0 14 16"><path d="M13 6L8 2v2.500H0V15h3V7.500h5V10z"/></svg></td><td class="num">3.</td><td>Turn <b>right</b> onto <b>Heng Mui Keng Terrace</b></td><td class="dist">62 m</td></tr>
                            <tr><td class="turn"><svg viewBox="0 0 14 16"><path d="M13 6L8 2v2.500H0V15h3V7.500h5V10z"/></svg></td><td class="num">4.</td><td>Turn <b>right</b> onto <b>Kent Ridge Dr</b></td><td class="dist">0.6 km</td></tr>
                            <tr><td class="turn"><svg viewBox="0 0 14 16"><path d="M0 6l5-4v2.500h8V15h-3V7.500H5V10z"/></svg></td><td class="num">5.</td><td>Keep <b>left</b> to continue toward <b>Kent Ridge Cres</b></td><td class="dist">60 m</td></tr>
                        </table>
                    </div>
                </div>
            </div>
        </main>
    </div>
</body>
</html>
```
FILE: styles.css
```css
* {
    box-sizing: border-box;
}
body {
    font-family: Lato, sans-serif;
    font-size: 16px;
    line-height: 22px;
    color: #222;
    background: #e8e8e8;
    margin: 0;
    height: 100vh;
    display: flex;
    flex-direction: column;
    overflow: hidden;
}
button, input, select {
    font-family: inherit;
    font-size: inherit;
}
button {
    cursor: pointer;
}

/* top bar */
.topbar {
    display: flex;
    align-items: center;
    justify-content: space-between;
    height: 60px;
    flex-shrink: 0;
    padding: 0 15px;
    background: #005aab;
    box-shadow: 0 1px 4px rgba(0, 0, 0, 0.3);
    position: relative;
    z-index: 1;
}
.topbar h1 {
    margin: 0;
    font-size: 20px;
    color: #fff;
}
.btn-logout {
    display: flex;
    align-items: center;
    gap: 7px;
    height: 36px;
    padding: 0 12px 0 15px;
    border: 0;
    border-radius: 4px;
    background: #eee;
    color: #777;
    font-weight: bold;
}
.layout {
    display: flex;
    flex: 1;
    min-height: 0;
}

/* sidebar */
.sidebar {
    width: 250px;
    flex-shrink: 0;
    background: #005aab;
}
.logo {
    display: flex;
    gap: 8px;
    height: 82px;
    padding: 15px 0 0 29px;
    background: #fff;
}
.logo-text {
    display: flex;
    flex-direction: column;
    padding-top: 4px;
    font-family: "Open Sans", sans-serif;
}
.logo-text strong {
    font-size: 22px;
    line-height: 24px;
    font-weight: 800;
    color: #34495e;
}
.logo-text span {
    font-size: 14px;
    line-height: 18px;
    font-weight: bold;
    letter-spacing: 8px;
    color: #ee3b35;
}
.sidebar ul {
    list-style: none;
    margin: 0;
    padding: 0;
}
.sidebar .second {
    margin-top: -2px;
}
.sidebar a {
    display: flex;
    align-items: center;
    gap: 24px;
    height: 45px;
    padding: 0 16px;
    color: #fff;
    text-decoration: none;
}
.sidebar a svg {
    width: 24px;
    height: 24px;
}
.sidebar a .arrow {
    width: 10px;
    height: 14px;
    margin-left: auto;
}

/* main card */
.card {
    display: flex;
    flex-direction: column;
    flex: 1;
    min-width: 0;
    margin: 3px 16px 0 6px;
    background: #fff;
    border-radius: 4px;
    box-shadow: 0 0 3px rgba(0, 0, 0, 0.4);
}
.card h2 {
    margin: 0;
    padding: 6px 15px 12px;
    font-size: 20px;
    background: #005aab;
    color: #fff;
    border-radius: 4px 4px 0 0;
}
.filters {
    display: flex;
    gap: 100px;
    padding: 26px 15px 0;
}
.btn-back {
    display: flex;
    align-items: center;
    justify-content: center;
    gap: 5px;
    width: 80px;
    height: 33px;
    border: 0;
    border-radius: 4px;
    background: #005aab;
    color: #fff;
    font-family: "Open Sans", sans-serif;
    font-size: 14px;
    font-weight: 600;
}
.field label {
    display: block;
}
.field input {
    display: block;
    width: 150px;
    height: 33px;
    padding: 0 12px;
    border: 1px solid #ccc;
    border-radius: 4px;
    color: #555;
}
.columns {
    display: flex;
    gap: 15px;
    flex: 1;
    min-height: 0;
}
.employees {
    display: flex;
    flex-direction: column;
    gap: 5px;
    flex: 1;
}
.listbox {
    display: flex;
    flex: 1;
    min-height: 0;
    border: 1px solid #bbb;
    border-bottom: 0;
    border-radius: 4px 4px 0 0;
}
.listbox select {
    flex: 1;
    height: 100%;
    padding: 6px 12px;
    border: 0;
    color: #555;
    background: none;
    scrollbar-width: none;
}
.listbox option {
    min-height: 20px;
    padding: 0 2px;
    line-height: 20px;
}
.listbox .current {
    background: #c8c8c8;
    color: #333;
}
.vbar {
    display: flex;
    justify-content: center;
    width: 17px;
    padding-top: 7px;
    background: #f1f1f1;
}
.movements {
    width: 688px;
    margin-right: 15px;
}

/* grid */
.legend {
    display: flex;
    justify-content: flex-end;
    gap: 32px;
    padding-top: 11px;
}
.legend span {
    display: flex;
    align-items: center;
    gap: 3px;
}
.legend i {
    width: 21px;
    height: 26px;
    border: 1px solid #ddd;
}
.in {
    background: #6495ed;
}
.out {
    background: #7cfc00;
}
.move {
    background: #f08080;
}
.scrollable {
    overflow-x: auto;
    padding-bottom: 26px;
    scrollbar-width: none;
}
.grid {
    width: 1100px;
    table-layout: fixed;
    border-collapse: collapse;
}
.grid th, .grid td {
    height: 61px;
    padding: 8px;
    border: 1px solid #ddd;
    text-align: left;
}
.grid th {
    background: #005aab;
    color: #fff;
}
.c-id {
    width: 66px;
}
.c-date {
    width: 150px;
}
.c-time {
    width: 84px;
}
.grid td:nth-child(3) {
    padding-right: 24px;
}
.hbar {
    display: flex;
    align-items: center;
    gap: 6px;
    height: 17px;
    padding: 0 6px;
    background: #f1f1f1;
}
.hbar .track {
    flex: 1;
}
.hbar .thumb {
    width: 62%;
    height: 13px;
    background: #c1c1c1;
}

/* map */
.map {
    position: relative;
    height: 497px;
    margin: 22px -12px 10px 0;
    overflow: hidden;
    font-family: Roboto, sans-serif;
}
.tiles {
    display: block;
    width: 100%;
    height: 100%;
}
.minor {
    fill: none;
    stroke: #fff;
    stroke-width: 4;
    stroke-linejoin: round;
}
.major {
    fill: none;
    stroke: #fff;
    stroke-width: 15;
    stroke-linejoin: round;
}
.casing {
    fill: none;
    stroke: #f5cf6b;
    stroke-width: 24;
    stroke-linejoin: round;
}
.road {
    fill: none;
    stroke: #ffe896;
    stroke-width: 18;
    stroke-linejoin: round;
}
.route {
    fill: none;
    stroke: #ff2b35;
    stroke-opacity: 0.6;
    stroke-width: 18;
    stroke-linejoin: round;
}
.label {
    font-size: 39px;
    paint-order: stroke;
    stroke: #fff;
    stroke-width: 6;
    stroke-opacity: 0.7;
}
.middle, .sign, .pin-letter {
    text-anchor: middle;
}
.brown {
    font-size: 36px;
    fill: #6b3a12;
}
.street {
    font-size: 33px;
    fill: #5a6872;
}
.place-name {
    fill: #5f7685;
}
.shop {
    fill: #4272c4;
}
.food {
    fill: #e07a4c;
}
.villa {
    fill: #1d8791;
}
.park {
    fill: #2c7d32;
}
.area {
    font-weight: 500;
    letter-spacing: 10px;
    fill: #75869c;
}
.sign {
    font-size: 27px;
    fill: #fff;
}
.pin-letter {
    font-size: 42px;
    font-weight: 500;
    fill: #fff;
}
.map button {
    display: flex;
    align-items: center;
    justify-content: center;
    padding: 0;
    border: 0;
    background: #fff;
}
.map-type {
    position: absolute;
    top: 10px;
    left: 10px;
    display: flex;
    box-shadow: 0 1px 4px rgba(0, 0, 0, 0.3);
}
.map .map-type button {
    height: 29px;
    padding: 0 8px;
    font-size: 11px;
    color: #565656;
}
.map .map-type .active {
    color: #000;
    font-weight: 500;
    border-right: 1px solid #e6e6e6;
}
.map .fullscreen {
    position: absolute;
    top: 10px;
    right: 14px;
    width: 25px;
    height: 25px;
}
.map-side {
    position: absolute;
    right: 10px;
    bottom: 24px;
    display: flex;
    flex-direction: column;
    gap: 10px;
}
.map-side button {
    width: 28px;
    height: 28px;
    box-shadow: 0 1px 4px rgba(0, 0, 0, 0.3);
}
.map .zoom button + button {
    border-top: 1px solid #e6e6e6;
}
.google {
    position: absolute;
    left: 6px;
    bottom: 2px;
    font-family: Lato, sans-serif;
    font-size: 20px;
    font-weight: bold;
}
.g-blue {
    color: #4285f4;
}
.g-red {
    color: #ea4335;
}
.g-yellow {
    color: #fbbc05;
}
.g-green {
    color: #34a853;
}
.credits {
    position: absolute;
    right: 0;
    bottom: 0;
    display: flex;
    gap: 12px;
    padding: 0 6px;
    font-size: 10px;
    line-height: 14px;
    color: #444;
    background: rgba(245, 245, 245, 0.7);
}
.credits a {
    color: #444;
    text-decoration: none;
}

/* directions */
.directions {
    font-family: Roboto, sans-serif;
    font-weight: 300;
}
.directions .place {
    display: flex;
    align-items: center;
    height: 45px;
    padding-left: 2px;
    background: #eee;
    border: 1px solid silver;
}
.directions .place svg {
    margin-right: 1px;
}
.directions .place text {
    fill: #fff;
    font-size: 14px;
    font-weight: 500;
    text-anchor: middle;
}
.directions p {
    margin: 0;
    padding: 9px 3px 4px;
}
.steps {
    border-collapse: collapse;
    margin-bottom: 10px;
}
.steps td {
    padding: 4px 3px;
    border-top: 1px solid #cdcdcd;
    vertical-align: top;
}
.steps .turn {
    width: 22px;
    padding: 6px 3px 0 5px;
}
.steps .turn svg {
    display: block;
    width: 14px;
    height: 16px;
    fill: #333;
}
.steps .dist {
    padding-left: 8px;
    white-space: nowrap;
}
.steps b {
    font-weight: 400;
}
.steps small {
    display: block;
    font-size: 14px;
    line-height: 20px;
}
```
